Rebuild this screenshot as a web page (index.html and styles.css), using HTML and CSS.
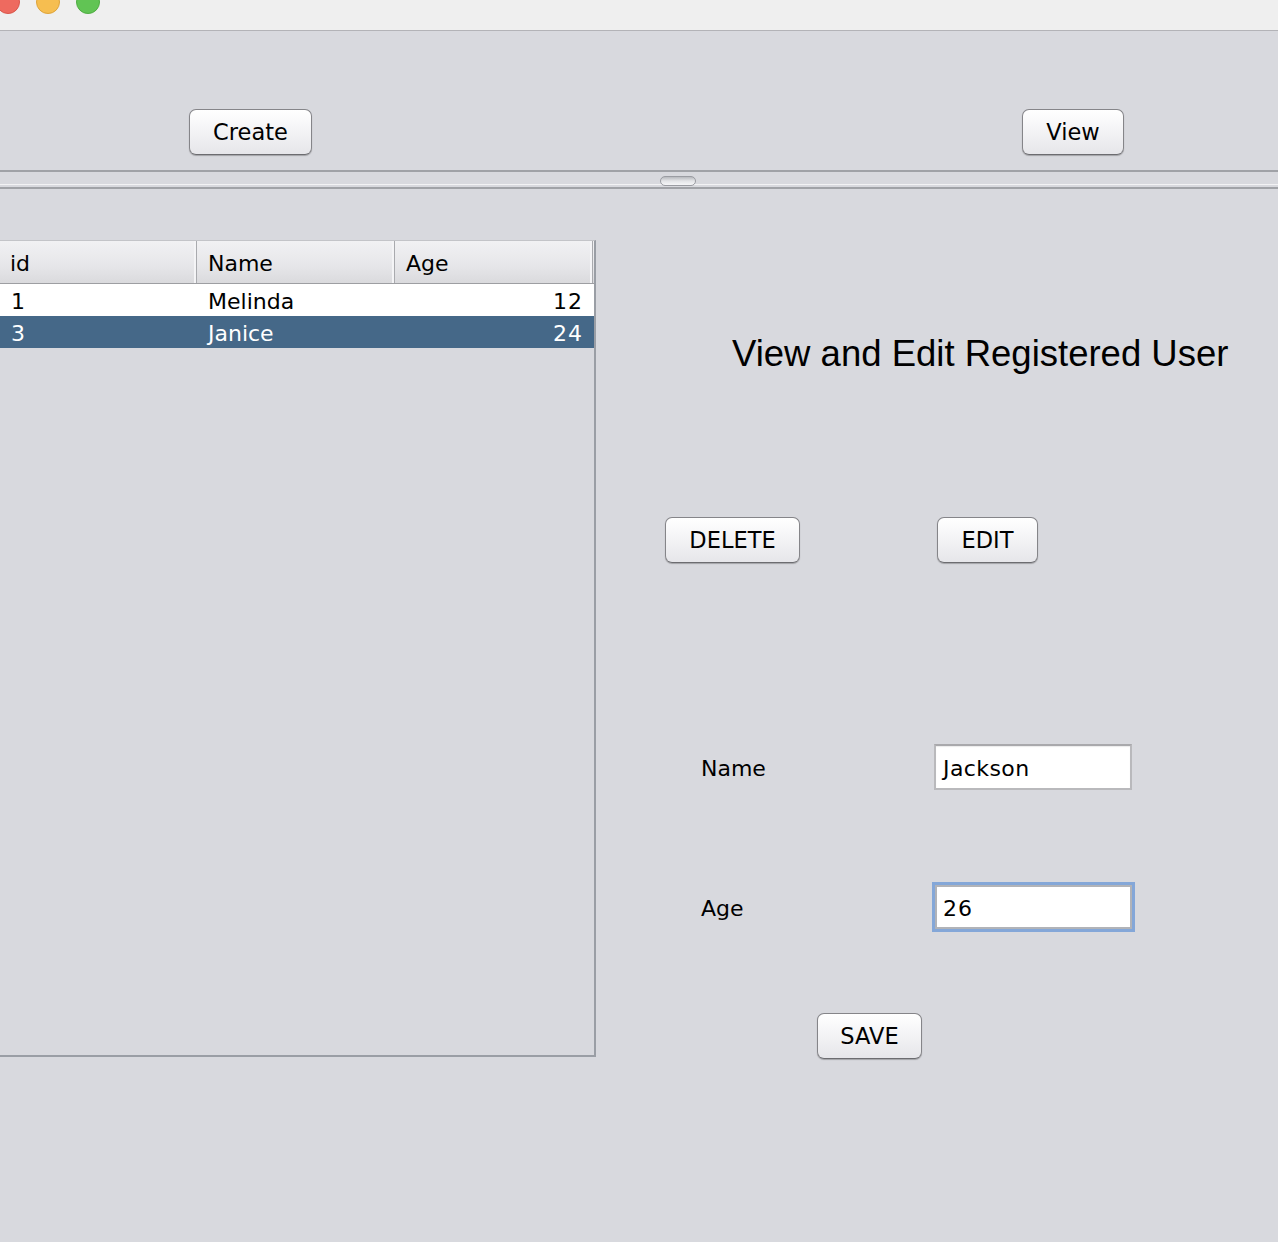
FILE: index.html
```html
<!DOCTYPE html>
<html>
<head>
<meta charset="utf-8">
<link rel="stylesheet" href="styles.css">
</head>
<body>
<div class="titlebar">
  <span class="light red"></span>
  <span class="light yellow"></span>
  <span class="light green"></span>
</div>
<div class="toppanel">
  <button class="btn btn-create">Create</button>
  <button class="btn btn-view">View</button>
</div>
<div class="divider"><span class="handle"></span></div>
<div class="main">
  <div class="tablepane">
    <div class="thead">
      <div class="th">id</div>
      <div class="th">Name</div>
      <div class="th">Age</div>
    </div>
    <div class="tr">
      <div class="td">1</div>
      <div class="td">Melinda</div>
      <div class="td num">12</div>
    </div>
    <div class="tr selected">
      <div class="td">3</div>
      <div class="td">Janice</div>
      <div class="td num">24</div>
    </div>
  </div>
  <div class="editor">
    <h1 class="title">View and Edit Registered User</h1>
    <div class="actions">
      <button class="btn btn-delete">DELETE</button>
      <button class="btn btn-edit">EDIT</button>
    </div>
    <div class="row row-name">
      <label class="lbl">Name</label>
      <div class="field">Jackson</div>
    </div>
    <div class="row row-age">
      <label class="lbl">Age</label>
      <div class="field focused">26</div>
    </div>
    <button class="btn btn-save">SAVE</button>
  </div>
</div>
</body>
</html>
```
FILE: styles.css
```css
html, body {
  margin: 0;
  padding: 0;
}
body {
  width: 1278px;
  height: 1242px;
  overflow: hidden;
  background: #d8d9de;
  font-family: "DejaVu Sans", sans-serif;
  font-size: 22px;
  color: #000;
}
.titlebar {
  height: 30px;
  background: #efefef;
  border-bottom: 1px solid #b3b3b7;
  display: flex;
  align-items: flex-start;
  overflow: hidden;
}
.light {
  display: block;
  width: 24px;
  height: 24px;
  border-radius: 50%;
  margin-top: -10px;
  box-sizing: border-box;
}
.red { background: #ee6a5f; border: 1px solid #d9564b; margin-left: -4px; }
.yellow { background: #f6be50; border: 1px solid #dea43a; margin-left: 16px; }
.green { background: #61c454; border: 1px solid #4fac42; margin-left: 16px; }

.toppanel {
  height: 139px;
  box-sizing: border-box;
  padding-top: 78px;
  display: flex;
  align-items: flex-start;
}
.btn {
  font-family: "DejaVu Sans", sans-serif;
  font-size: 22.5px;
  color: #000;
  height: 46px;
  box-sizing: border-box;
  border: 1px solid #858589;
  border-bottom-color: #6c6c70;
  border-radius: 7px;
  background: linear-gradient(#ffffff 0%, #f4f4f6 45%, #e6e6ea 100%);
  box-shadow: 0 1px 1px rgba(0,0,0,0.25);
  padding: 0;
  display: flex;
  align-items: center;
  justify-content: center;
}
.btn-create { width: 123px; margin-left: 189px; }
.btn-view { width: 102px; margin-left: 710px; }

.divider {
  height: 19px;
  box-sizing: border-box;
  border-top: 2px solid #a0a2a7;
  border-bottom: 2px solid #a0a2a7;
  box-shadow: inset 0 -2px 0 #d8d9de, inset 0 -3px 0 #f2f2f4;
  display: flex;
  justify-content: flex-start;
}
.handle {
  display: block;
  width: 36px;
  height: 10px;
  margin-top: 4px;
  margin-left: 660px;
  box-sizing: border-box;
  border: 1px solid #9a9ca2;
  border-radius: 5px;
  background: linear-gradient(#b7b9be, #e4e5e8 50%, #f6f6f8);
}

.main {
  display: flex;
  align-items: flex-start;
}
.tablepane {
  width: 596px;
  height: 817px;
  margin-top: 51px;
  box-sizing: border-box;
  border-right: 2px solid #9a9ea5;
  border-bottom: 2px solid #9a9ea5;
  border-top: 1px solid #c3c4c8;
  flex: none;
}
.thead {
  display: grid;
  grid-template-columns: 197px 198px 198px;
  height: 43px;
  box-sizing: border-box;
  border-bottom: 1px solid #9d9ea2;
  background: linear-gradient(#f1f1f3, #e6e6e9 60%, #dadadd);
}
.th {
  display: flex;
  align-items: center;
  padding-left: 11px;
  border-right: 1px solid #a9aaae;
  box-shadow: inset -2px 0 0 #f4f4f6;
  padding-top: 2px;
}
.th:first-child { padding-left: 10px; }
.tr {
  display: grid;
  grid-template-columns: 197px 198px 198px;
  height: 32px;
  background: #ffffff;
}
.tr.selected {
  background: #456888;
  color: #ffffff;
}
.td {
  display: flex;
  align-items: center;
  padding-left: 11px;
  padding-top: 2px;
}
.td.num {
  justify-content: flex-end;
  padding-left: 0;
  padding-right: 10px;
  letter-spacing: 1px;
}

.editor {
  flex: 1;
  display: flex;
  flex-direction: column;
  align-items: flex-start;
}
.title {
  font-family: "Liberation Sans", Arial, sans-serif;
  font-weight: normal;
  font-size: 36.5px;
  line-height: 40px;
  margin: 145px 0 0 136px;
  white-space: nowrap;
}
.actions {
  display: flex;
  margin-top: 143px;
}
.btn-delete { width: 135px; margin-left: 69px; }
.btn-edit { width: 101px; margin-left: 137px; }

.row {
  display: flex;
  align-items: center;
}
.row-name { margin-top: 181px; }
.row-age { margin-top: 92px; }
.lbl {
  width: 233px;
  margin-left: 105px;
  padding-top: 2px;
}
.row-age .lbl { width: 231px; }
.field {
  width: 198px;
  height: 46px;
  box-sizing: border-box;
  background: #ffffff;
  border: 2px solid #b9b9bc;
  border-top-color: #a9a9ac;
  box-shadow: inset 0 1px 1px rgba(0,0,0,0.08);
  padding-left: 7px;
  padding-top: 2px;
  display: flex;
  align-items: center;
  letter-spacing: 0.4px;
}
.field.focused {
  width: 203px;
  height: 50px;
  border: 3px solid #84a7d8;
  box-shadow: inset 0 0 0 2px #b1b3b8;
  padding-left: 8px;
  letter-spacing: 1px;
}
.btn-save { width: 105px; margin-left: 221px; margin-top: 81px; }
```
